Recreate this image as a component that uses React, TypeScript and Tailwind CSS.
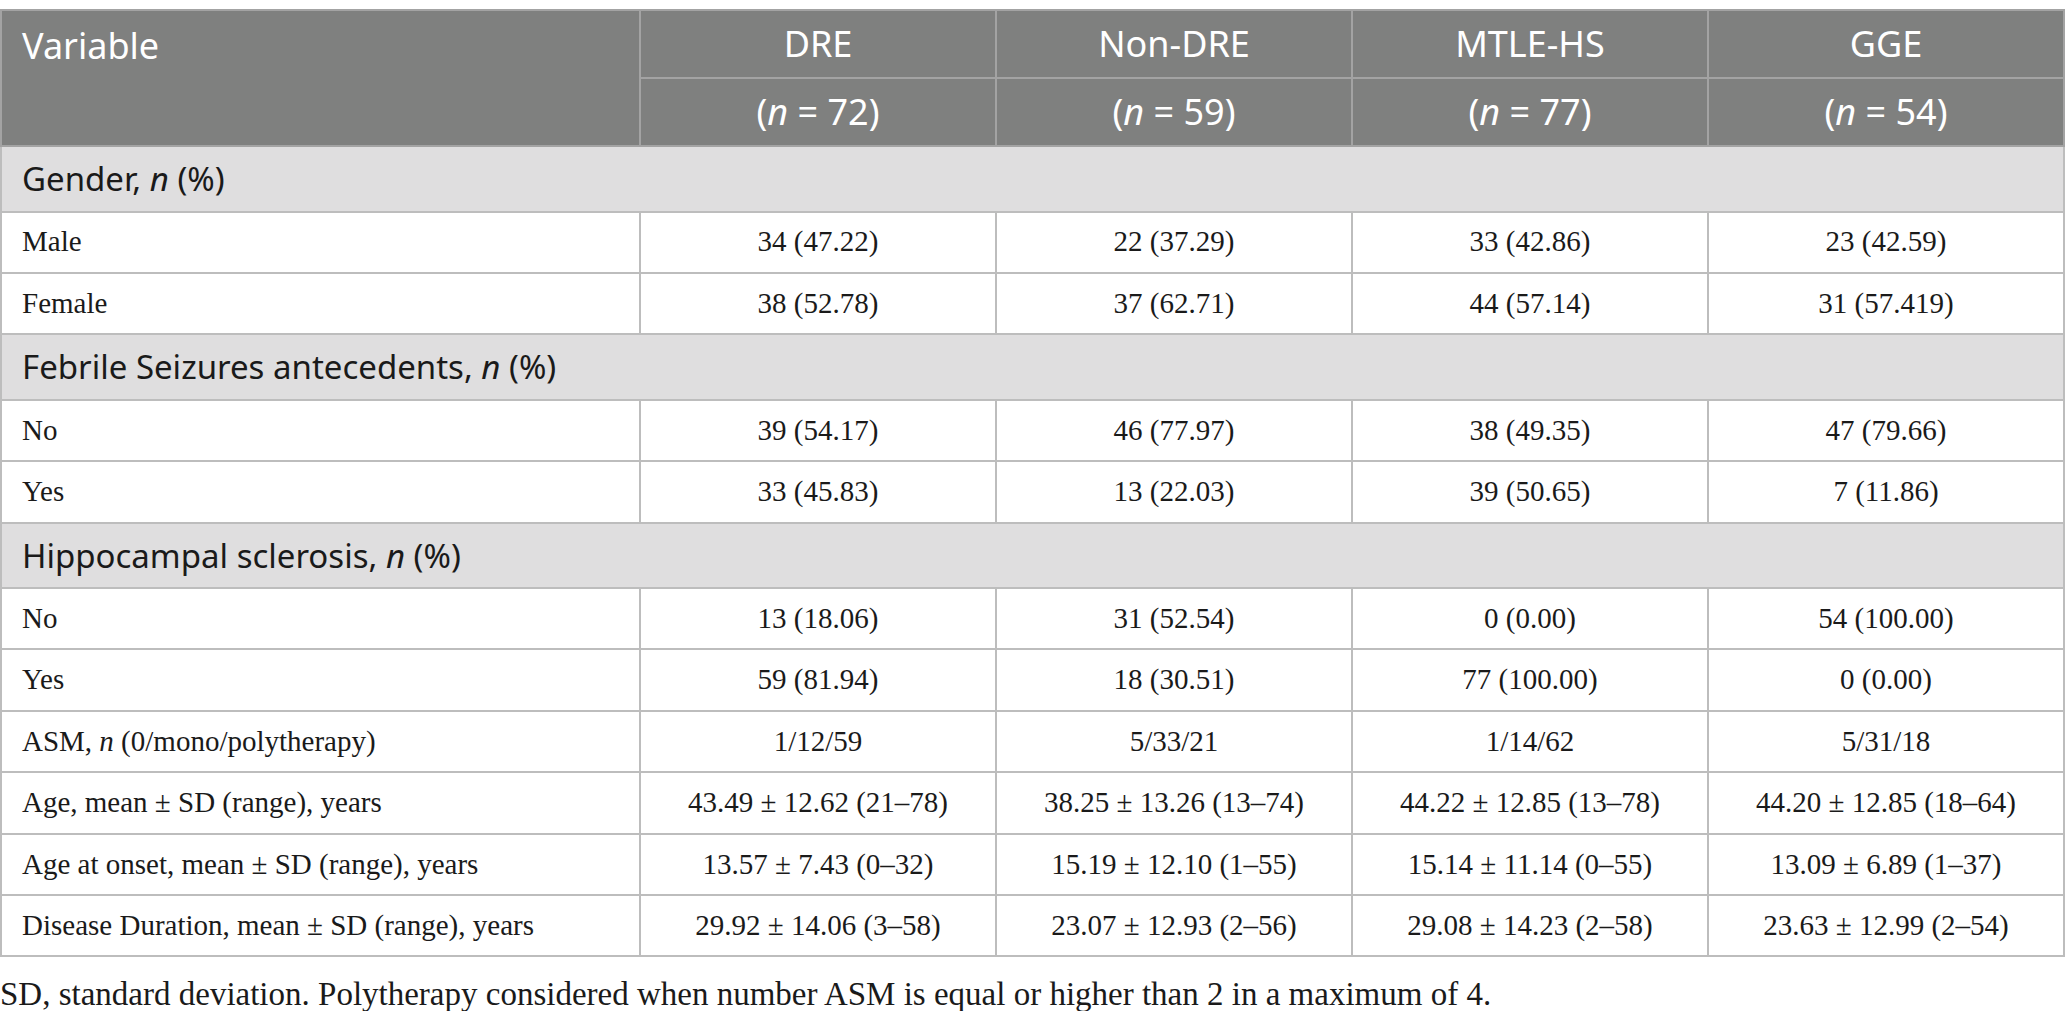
import React from 'react';

interface DataRow {
  label: React.ReactNode;
  values: string[];
}

interface Section {
  title?: React.ReactNode;
  rows: DataRow[];
}

const sections: Section[] = [
  {
    title: <>Gender, <i>n</i> (%)</>,
    rows: [
      { label: 'Male', values: ['34 (47.22)', '22 (37.29)', '33 (42.86)', '23 (42.59)'] },
      { label: 'Female', values: ['38 (52.78)', '37 (62.71)', '44 (57.14)', '31 (57.419)'] },
    ],
  },
  {
    title: <>Febrile Seizures antecedents, <i>n</i> (%)</>,
    rows: [
      { label: 'No', values: ['39 (54.17)', '46 (77.97)', '38 (49.35)', '47 (79.66)'] },
      { label: 'Yes', values: ['33 (45.83)', '13 (22.03)', '39 (50.65)', '7 (11.86)'] },
    ],
  },
  {
    title: <>Hippocampal sclerosis, <i>n</i> (%)</>,
    rows: [
      { label: 'No', values: ['13 (18.06)', '31 (52.54)', '0 (0.00)', '54 (100.00)'] },
      { label: 'Yes', values: ['59 (81.94)', '18 (30.51)', '77 (100.00)', '0 (0.00)'] },
      { label: <>ASM, <i>n</i> (0/mono/polytherapy)</>, values: ['1/12/59', '5/33/21', '1/14/62', '5/31/18'] },
      {
        label: 'Age, mean ± SD (range), years',
        values: ['43.49 ± 12.62 (21–78)', '38.25 ± 13.26 (13–74)', '44.22 ± 12.85 (13–78)', '44.20 ± 12.85 (18–64)'],
      },
      {
        label: 'Age at onset, mean ± SD (range), years',
        values: ['13.57 ± 7.43 (0–32)', '15.19 ± 12.10 (1–55)', '15.14 ± 11.14 (0–55)', '13.09 ± 6.89 (1–37)'],
      },
      {
        label: 'Disease Duration, mean ± SD (range), years',
        values: ['29.92 ± 14.06 (3–58)', '23.07 ± 12.93 (2–56)', '29.08 ± 14.23 (2–58)', '23.63 ± 12.99 (2–54)'],
      },
    ],
  },
];

const groups = [
  { name: 'DRE', n: 72 },
  { name: 'Non-DRE', n: 59 },
  { name: 'MTLE-HS', n: 77 },
  { name: 'GGE', n: 54 },
];

const sans = "font-['Noto_Sans',_'Open_Sans',_sans-serif]";
const serif = "font-['Liberation_Serif',_'Times_New_Roman',_serif]";

const App: React.FC = () => {
  return (
    <div className="min-h-screen bg-white pt-[9px]">
      <table className="w-full table-fixed border-collapse border-2 border-[#bdbdbd]">
        <colgroup>
          <col className="w-[639px]" />
          <col />
          <col />
          <col />
          <col />
        </colgroup>
        <thead className={`${sans} text-[36px] font-normal text-white`}>
          <tr className="h-[68px] bg-[#7f807f]">
            <th
              rowSpan={2}
              className="border-2 border-[#a3a3a3] px-[20px] pt-[8px] text-left align-top font-normal"
            >
              Variable
            </th>
            {groups.map((g) => (
              <th key={g.name} className="border-2 border-[#a3a3a3] text-center font-normal">
                {g.name}
              </th>
            ))}
          </tr>
          <tr className="h-[68px] bg-[#7f807f]">
            {groups.map((g) => (
              <th key={g.name} className="border-2 border-[#a3a3a3] text-center font-normal">
                (<i>n</i> = {g.n})
              </th>
            ))}
          </tr>
        </thead>
        <tbody>
          {sections.map((section, si) => (
            <React.Fragment key={si}>
              {section.title && (
                <tr className="h-[65.5px] bg-[#dfdedf]">
                  <td
                    colSpan={5}
                    className={`${sans} border-2 border-[#bdbdbd] px-[20px] text-[33px] text-[#1a1a1a]`}
                  >
                    {section.title}
                  </td>
                </tr>
              )}
              {section.rows.map((row, ri) => (
                <tr key={ri} className={`${serif} h-[61.4px] text-[29px] text-[#1a1a1a]`}>
                  <td className="border-2 border-[#bdbdbd] px-[20px] text-left">{row.label}</td>
                  {row.values.map((v, vi) => (
                    <td key={vi} className="border-2 border-[#bdbdbd] text-center">
                      {v}
                    </td>
                  ))}
                </tr>
              ))}
            </React.Fragment>
          ))}
        </tbody>
      </table>
      <p className={`${serif} mt-[19px] text-[33px] leading-[36px] text-[#1a1a1a]`}>
        SD, standard deviation. Polytherapy considered when number ASM is equal or higher than 2 in a maximum of 4.
      </p>
    </div>
  );
};

export default App;
